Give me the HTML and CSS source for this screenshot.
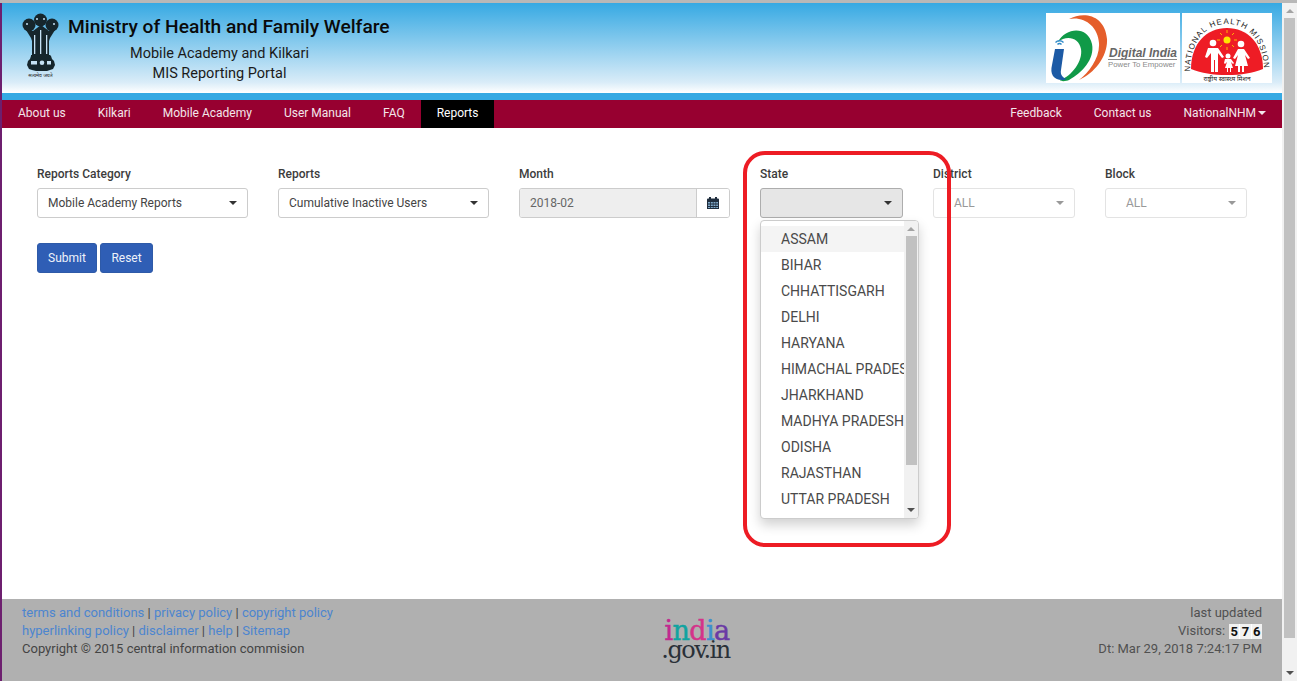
FILE: index.html
```html
<!DOCTYPE html>
<html lang="en">
<head>
<meta charset="utf-8">
<title>MIS Reporting Portal</title>
<link rel="stylesheet" href="styles.css">
</head>
<body>
<div class="shell">
  <div class="page">
    <header class="masthead">
      <div class="brand">
        <svg class="emblem" viewBox="0 0 37 66" aria-hidden="true">
          <g fill="#16262c">
            <circle cx="18.500" cy="7" r="6.500"/>
            <circle cx="7" cy="12" r="6.500"/>
            <circle cx="30" cy="12" r="6.500"/>
            <path d="M4 17l5 8 1 3v14h17V28l1-3 5-8-6 1-8-6-8 6z"/>
            <path d="M9 42h19l1 1 1 3 2 2 1 4-2 4-3 1-3 1H14l-4-1-3-1-2-4 1-4 2-2 1-3z"/>
          </g>
          <g fill="#c5e1f4">
            <rect x="12" y="22" width="1.300" height="19"/>
            <rect x="18" y="17" width="1.300" height="24"/>
            <rect x="24" y="22" width="1.300" height="19"/>
            <circle cx="5" cy="11" r="1"/>
            <circle cx="32" cy="11" r="1"/>
            <circle cx="15" cy="6" r="1"/>
            <circle cx="22" cy="6" r="1"/>
            <rect x="9" y="48" width="6" height="3.500"/>
            <circle cx="20" cy="49.700" r="2.300"/>
            <rect x="25" y="48" width="4" height="3.500"/>
          </g>
          <text x="18.500" y="63.500" class="emblem-motto">सत्यमेव जयते</text>
        </svg>
        <div class="titles">
          <h1>Ministry of Health and Family Welfare</h1>
          <p>Mobile Academy and Kilkari</p>
          <p class="second">MIS Reporting Portal</p>
        </div>
      </div>
      <div class="logos">
        <svg class="logo-di" viewBox="0 0 134 70" aria-hidden="true">
          <rect width="134" height="70" fill="#fff"/>
          <path d="M23 6C38-2 59 2 61 26c1 17-12 34-28 41 10-8 21-22 20-37C52 13 38 3 23 6z" fill="#e55e2b"/>
          <path d="M12 29C20 14 42 13 46 31c3 15-10 29-23 36-2 1-8 2-9 0 12-4 23-19 21-31-2-12-15-14-23-7z" fill="#109a48"/>
          <path d="M9 36h9l-3 21c-1 5 2 8 6 9-5 2-11 1-14-3-2-3-2-7-1-11z" fill="#1c5aa5"/>
          <path d="M9 29a6 6 0 0 1 9 0l-1 1a5 5 0 0 0-7 0zM11 31a3 3 0 0 1 5 0l-1 1a2 2 0 0 0-3 0z" fill="#2f8ac9"/>
          <text x="63" y="44" class="di-title">Digital India</text>
          <rect x="62" y="46" width="69" height="1" fill="#888"/>
          <text x="62" y="54" class="di-sub">Power To Empower</text>
        </svg>
        <svg class="logo-nhm" viewBox="0 0 90 70" aria-hidden="true">
          <rect width="90" height="70" fill="#fff"/>
          <path d="M9 56C9 30 25 15 45 15s36 15 36 41c-11 4-21 6-36 6S20 60 9 56z" fill="#ee1c25"/>
          <path id="nhm-arc" d="M8 60C8 28 24 11 45 11s37 17 37 49" fill="none"/>
          <text class="nhm-arc-text"><textPath href="#nhm-arc" startOffset="1" textLength="132">NATIONAL HEALTH MISSION</textPath></text>
          <circle cx="45" cy="27" r="3.500" fill="#ffe600"/>
          <g stroke="#ffb400" stroke-width="1">
            <path d="M45 20v-3M45 34v3M38 27h-3M52 27h3M40 22l-2-2M50 22l2-2M40 32l-2 2M50 32l2 2"/>
          </g>
          <g fill="#fff">
            <circle cx="31" cy="30" r="3.300"/>
            <path d="M26 35h10l6 9-2 1-4-5v19h-3V47h-1v12h-3V40l-4 5-2-1z"/>
            <circle cx="59" cy="31" r="3.300"/>
            <path d="M56 36h6l6 9-2 1-3-4 3 11h-4v6h-2v-6h-2v6h-2v-6h-3l3-11-3 4-2-1z"/>
            <circle cx="46" cy="43" r="2.500"/>
            <path d="M43 46h6l3 4-1 1-2-2 2 6h-2v4h-1v-4h-2v4h-1v-4h-2l2-6-2 2-1-1z"/>
          </g>
          <text x="45" y="67.500" class="nhm-hindi">राष्ट्रीय स्वास्थ्य मिशन</text>
        </svg>
      </div>
    </header>
    <div class="stripe"></div>
    <nav class="navbar">
      <ul class="nav-list">
        <li><a href="#">About us</a></li>
        <li><a href="#">Kilkari</a></li>
        <li><a href="#">Mobile Academy</a></li>
        <li><a href="#">User Manual</a></li>
        <li><a href="#">FAQ</a></li>
        <li><a href="#" class="active">Reports</a></li>
      </ul>
      <ul class="nav-list">
        <li><a href="#">Feedback</a></li>
        <li><a href="#">Contact us</a></li>
        <li><a href="#" class="user">NationalNHM<span class="caret caret-white"></span></a></li>
      </ul>
    </nav>
    <main class="content">
      <form class="filters">
        <div class="field">
          <label>Reports Category</label>
          <div class="select"><span>Mobile Academy Reports</span><i class="caret"></i></div>
        </div>
        <div class="field">
          <label>Reports</label>
          <div class="select"><span>Cumulative Inactive Users</span><i class="caret"></i></div>
        </div>
        <div class="field">
          <label>Month</label>
          <div class="date">
            <span class="date-value">2018-02</span>
            <span class="date-btn">
              <svg class="calendar" viewBox="0 0 12 12" aria-hidden="true">
                <path d="M0 2.500q0-1 1-1h1V0h2v1.500h4V0h2v1.500h1q1 0 1 1V12H0z" fill="#1f2d3d"/>
                <path d="M1 5h2v1.500H1zM3.800 5h2v1.500h-2zM6.500 5h2v1.500h-2zM9.200 5H11v1.500H9.200zM1 7.500h2V9H1zM3.800 7.500h2V9h-2zM6.500 7.500h2V9h-2zM9.200 7.500H11V9H9.200zM1 10h2v1H1zM3.800 10h2v1h-2zM6.500 10h2v1h-2zM9.200 10H11v1H9.200z" fill="#7fa8c9"/>
              </svg>
            </span>
          </div>
        </div>
        <div class="field field-state">
          <label>State</label>
          <div class="select select-open"><span></span><i class="caret"></i></div>
          <div class="menu">
            <ul class="menu-list">
              <li class="hover">ASSAM</li>
              <li>BIHAR</li>
              <li>CHHATTISGARH</li>
              <li>DELHI</li>
              <li>HARYANA</li>
              <li>HIMACHAL PRADESH</li>
              <li>JHARKHAND</li>
              <li>MADHYA PRADESH</li>
              <li>ODISHA</li>
              <li>RAJASTHAN</li>
              <li>UTTAR PRADESH</li>
            </ul>
            <div class="scrollbar scrollbar-menu">
              <i class="arrow-up"></i>
              <div class="track"><b class="thumb thumb-menu"></b></div>
              <i class="arrow-down"></i>
            </div>
          </div>
        </div>
        <div class="field">
          <label>District</label>
          <div class="select select-muted"><span>ALL</span><i class="caret caret-muted"></i></div>
        </div>
        <div class="field">
          <label>Block</label>
          <div class="select select-muted"><span>ALL</span><i class="caret caret-muted"></i></div>
        </div>
      </form>
      <div class="actions">
        <button type="button" class="btn">Submit</button>
        <button type="button" class="btn">Reset</button>
      </div>
      <div class="annotation"></div>
    </main>
    <footer class="footer">
      <div class="foot-left">
        <div><a href="#">terms and conditions</a> | <a href="#">privacy policy</a> | <a href="#">copyright policy</a></div>
        <div><a href="#">hyperlinking policy</a> | <a href="#">disclaimer</a> | <a href="#">help</a> | <a href="#">Sitemap</a></div>
        <div>Copyright © 2015 central information commision</div>
      </div>
      <div class="foot-logo">
        <div class="india"><span class="c1">i</span><span class="c2">n</span><span class="c3">d</span><span class="c4">i</span><span class="c5">a</span></div>
        <div class="govin">.gov.in</div>
      </div>
      <div class="foot-right">
        <div>last updated</div>
        <div class="visitors">Visitors: <span class="digits"><b>5</b><b>7</b><b>6</b></span></div>
        <div>Dt: Mar 29, 2018 7:24:17 PM</div>
      </div>
    </footer>
  </div>
  <div class="scrollbar scrollbar-page">
    <i class="arrow-up"></i>
    <div class="track"><b class="thumb thumb-page"></b></div>
    <i class="arrow-down"></i>
  </div>
</div>
</body>
</html>
```
FILE: styles.css
```css
* { box-sizing: border-box; }
html, body { margin: 0; height: 100%; overflow: hidden; }
body { font-family: Roboto, "Liberation Sans", sans-serif; font-size: 13px; color: #333; background: #fff; }
a { text-decoration: none; color: inherit; }
ul { list-style: none; margin: 0; padding: 0; }

.shell { display: flex; height: 681px; border-top: 3px solid #b8b8b8; }
.page { flex: 1; min-width: 0; display: flex; flex-direction: column; border-left: 2px solid #6d1f6f; }

.masthead { height: 90px; display: flex; justify-content: space-between; padding: 10px 10px 0 20px; background: linear-gradient(#36a9e3, #d9ecf8 88%, #fff); }
.brand { display: flex; align-items: flex-start; }
.emblem { width: 37px; height: 66px; flex: none; }
.emblem-motto { font-family: "Noto Sans", sans-serif; font-size: 5px; text-anchor: middle; fill: #222; }
.titles { margin: 2px 0 0 9px; text-align: center; width: 323px; color: #1a1a1a; }
.titles h1 { margin: 0; font-size: 19.2px; line-height: 23px; font-weight: 500; color: #0a0a0a; white-space: nowrap; text-align: left; }
.titles p { margin: 6px 20px 0 0; font-size: 14.5px; line-height: 20px; }
.titles .second { margin-top: 0; }

.logos { display: flex; gap: 2px; }
.logo-di { width: 134px; height: 70px; display: block; }
.logo-nhm { width: 90px; height: 70px; display: block; }
.di-title { font-family: "Liberation Sans", sans-serif; font-size: 12px; font-weight: 700; font-style: italic; fill: #666; }
.di-sub { font-family: "Liberation Sans", sans-serif; font-size: 7.8px; fill: #8a8a8a; }
.nhm-arc-text { font-family: "Liberation Sans", sans-serif; font-size: 8px; fill: #222; }
.nhm-hindi { font-family: "Noto Sans", sans-serif; font-size: 6.5px; text-anchor: middle; fill: #222; }

.stripe { height: 7px; background: #36a9e3; }

.navbar { height: 28px; flex: none; display: flex; justify-content: space-between; background: #970030; color: #f3e6ea; }
.nav-list { display: flex; }
.nav-list a { display: flex; align-items: center; height: 28px; padding: 0 16px 3px; font-size: 12px; }
.nav-list a.active { background: #000; color: #fff; }
.caret { display: inline-block; width: 0; height: 0; border-left: 4px solid transparent; border-right: 4px solid transparent; border-top: 4px solid #333; }
.caret-white { border-top-color: #f3e6ea; margin-left: 2px; }
.caret-muted { border-top-color: #999; }

.content { flex: 1; position: relative; padding: 38px 0 0 35px; }
.filters { display: grid; grid-template-columns: 211px 211px 211px 143px 142px 142px; column-gap: 30px; }
.field { position: relative; }
.field label { display: block; font-size: 12px; font-weight: 500; line-height: 17px; color: #3c3c3c; margin-bottom: 5px; }
.select { height: 30px; display: flex; align-items: center; justify-content: space-between; padding: 0 10px 1px 10px; border: 1px solid #ccc; border-radius: 3px; background: #fff; font-size: 12px; color: #444; }
.select-open { background: #e6e6e6; border-color: #adadad; }
.select-muted { border-color: #e3e3e3; color: #999; padding-left: 20px; }

.date { height: 30px; display: flex; border: 1px solid #ccc; border-radius: 3px; overflow: hidden; }
.date-value { flex: 1; display: flex; align-items: center; padding: 0 0 1px 10px; background: #eee; color: #666; font-size: 12px; border-right: 1px solid #ccc; }
.date-btn { width: 32px; display: flex; align-items: center; justify-content: center; background: #fff; }
.calendar { width: 12px; height: 12px; }

.menu { position: absolute; top: 54px; left: 0; width: 159px; height: 299px; display: flex; background: #fff; border: 1px solid #ccc; border-radius: 4px; box-shadow: 0 6px 12px rgba(0,0,0,.18); z-index: 2; overflow: hidden; }
.menu-list { width: 143px; padding-top: 5px; overflow: hidden; flex: none; }
.menu-list li { height: 26px; line-height: 26px; padding-left: 20px; font-size: 14px; color: #4a4a4a; white-space: nowrap; overflow: hidden; }
.menu-list li.hover { background: #f4f4f4; }

.scrollbar { display: flex; flex-direction: column; align-items: center; background: #f1f1f1; }
.track { flex: 1; width: 100%; }
.thumb { display: block; background: #c1c1c1; }
.arrow-up, .arrow-down { display: block; width: 0; height: 0; border-left: 4px solid transparent; border-right: 4px solid transparent; flex: none; }
.arrow-up { border-bottom: 4px solid #a3a3a3; margin: 6px 0 5px; }
.arrow-down { border-top: 4px solid #505050; margin: 5px 0 6px; }
.scrollbar-menu { width: 14px; flex: none; }
.scrollbar-menu .track { padding: 0 1px 0 2px; }
.thumb-menu { height: 229px; }
.scrollbar-page { width: 15px; flex: none; }
.scrollbar-page .track { padding: 0 2px; }
.thumb-page { height: 620px; }

.actions { display: flex; gap: 3px; margin-top: 25px; }
.btn { height: 30px; padding: 0; border: 1px solid #2e5aa8; border-radius: 3px; background: #2f5eb5; color: #eef2fa; font: 12px Roboto, sans-serif; }
.btn:first-child { width: 60px; }
.btn:last-child { width: 53px; }

.annotation { position: absolute; left: 741px; top: 23px; width: 208px; height: 396px; border: 4px solid #ed1c24; border-radius: 22px; z-index: 3; pointer-events: none; }

.footer { height: 82px; flex: none; display: grid; grid-template-columns: 640px 70px 1fr; background: #b0b0b0; padding: 5px 20px 0; font-size: 13px; line-height: 18px; color: #444; }
.foot-left a { color: #4c85cf; }
.foot-right { text-align: right; color: #505050; }
.foot-logo { margin-top: 13px; text-align: center; font-family: "DejaVu Serif", serif; white-space: nowrap; }
.india { font-size: 27px; line-height: 27px; height: 21px; letter-spacing: -.6px; -webkit-text-stroke: .5px; }
.govin { font-size: 24px; line-height: 24px; color: #2a3038; letter-spacing: -1.5px; margin-left: -3px; }
.c1 { color: #c3298f; } .c2 { color: #11a3a0; } .c3 { color: #d4338a; } .c4 { color: #3d8fd0; } .c5 { color: #6a3aa5; }
.visitors { display: flex; justify-content: flex-end; gap: 4px; }
.digits { display: inline-flex; background: #fff; gap: 1px; height: 15px; margin-top: 2px; }
.digits b { width: 10.300px; background: #f1f1f1; color: #111; font-size: 13px; line-height: 15px; text-align: center; font-weight: 700; }
```
